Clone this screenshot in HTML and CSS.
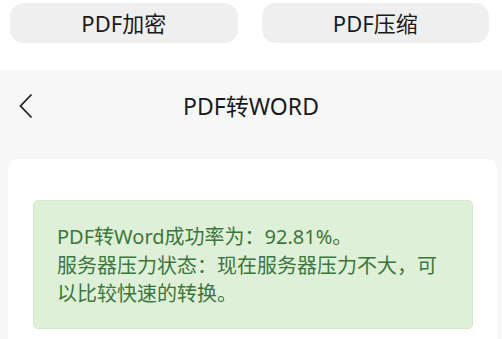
FILE: index.html
```html
<!DOCTYPE html>
<html lang="zh">
<head>
<meta charset="utf-8">
<link rel="stylesheet" href="styles.css">
</head>
<body>
<div class="top">
  <div class="btn">PDF加密</div>
  <div class="btn">PDF压缩</div>
</div>
<div class="main">
  <div class="header">
    <svg class="back" width="14" height="26" viewBox="0 0 14 26"><path d="M12.5 1.5 L1.5 13 L12.5 24.5" fill="none" stroke="#222" stroke-width="1.8"/></svg>
    <div class="title">PDF转WORD</div>
  </div>
  <div class="card">
    <div class="alert">PDF转Word成功率为：92.81%。<br>服务器压力状态：现在服务器压力不大，可以比较快速的转换。</div>
  </div>
</div>
</body>
</html>
```
FILE: styles.css
```css
html, body {
  margin: 0;
  padding: 0;
  background: #fff;
  font-family: "Noto Sans", "Noto Sans CJK SC", sans-serif;
}
.top {
  height: 70px;
  display: flex;
  gap: 24px;
  padding: 3px 13px 0 10px;
  box-sizing: border-box;
}
.btn {
  flex: 1;
  height: 40px;
  background: #efefef;
  border-radius: 14px;
  display: flex;
  align-items: center;
  justify-content: center;
  font-size: 22px;
  color: #1a1a1a;
  padding-bottom: 2px;
  box-sizing: border-box;
}
.main {
  background: #f7f7f7;
  height: 269px;
  overflow: hidden;
}
.header {
  height: 89px;
  display: flex;
  align-items: center;
  justify-content: center;
  position: relative;
}
.back {
  position: absolute;
  left: 19px;
  top: 23px;
}
.title {
  font-size: 23px;
  color: #1a1a1a;
  margin-top: -19px;
}
.card {
  background: #fff;
  margin: 0 5px 0 8px;
  border-radius: 9px;
  padding: 41px 24px 0 25px;
  height: 200px;
}
.alert {
  background: #dff0d8;
  border: 1px solid #d3e8c8;
  border-radius: 5px;
  color: #3c763d;
  font-size: 20px;
  line-height: 28.5px;
  padding: 22px 22px 19px 23px;
}
```
